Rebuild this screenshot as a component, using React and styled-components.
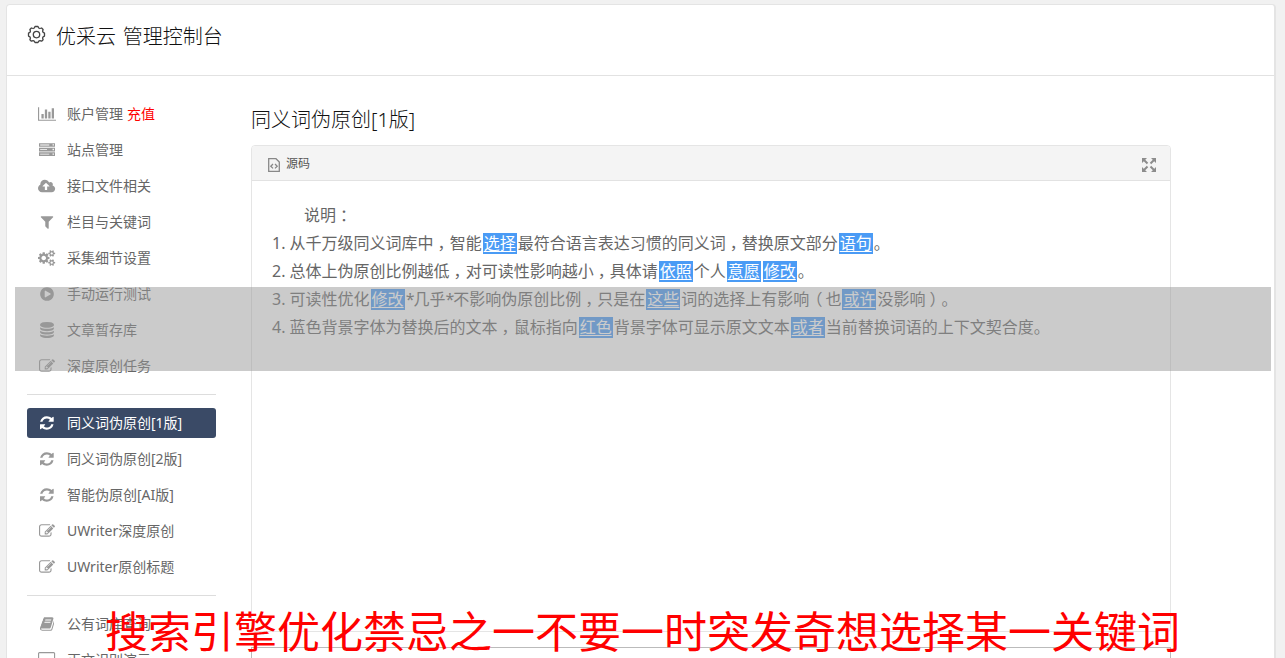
import React from 'react';
import styled, { createGlobalStyle } from 'styled-components';

const GlobalStyle = createGlobalStyle`
  * {
    box-sizing: border-box;
  }

  body {
    margin: 0;
    background: #f1f1f1;
    color: #666;
    font-family: 'Noto Sans', 'Noto Sans CJK SC', sans-serif;
    font-size: 14px;
    overflow: hidden;
  }
`;

const Page = styled.div`
  position: relative;
  height: 658px;
  padding: 4px 9px 0 6px;
  overflow: hidden;
`;

const Panel = styled.div`
  height: 700px;
  background: #fff;
  border: 1px solid #e4e4e4;
  border-right-width: 2px;
  border-radius: 4px;
`;

const Header = styled.header`
  display: flex;
  align-items: flex-start;
  gap: 10px;
  height: 71px;
  padding: 16px 20px 0;
  border-bottom: 1px solid #e2e2e2;

  svg {
    margin-top: 4px;
  }

  h1 {
    margin: 0;
    padding-top: 1px;
    color: #111;
    font-size: 20px;
    font-weight: 300;
    line-height: 30px;
    word-spacing: 1.5px;
  }
`;

const Columns = styled.div`
  display: flex;
  gap: 35px;
  padding: 23px 0 0 20px;
`;

const Menu = styled.nav`
  display: flex;
  flex-direction: column;
  gap: 6px;
  width: 189px;
  flex: none;
`;

const MenuItem = styled.a`
  display: flex;
  align-items: center;
  height: 30px;
  padding-left: 10px;
  border-radius: 3px;
  line-height: 30px;
  white-space: nowrap;
  color: ${({ $active }) => ($active ? '#fff' : '#666')};
  background: ${({ $active }) => ($active ? '#3a4a66' : 'transparent')};

  svg {
    fill: ${({ $active }) => ($active ? '#fff' : '#999')};
  }

  em {
    margin-left: 4px;
    color: #f00;
    font-style: normal;
  }
`;

const IconCell = styled.span`
  display: flex;
  justify-content: center;
  width: 20px;
  margin-right: 10px;
`;

const Divider = styled.hr`
  width: 100%;
  height: 1px;
  margin: 7px 0;
  border: 0;
  background: #ddd;
`;

const Content = styled.main`
  display: flex;
  flex-direction: column;
  width: 920px;

  h2 {
    margin: 6px 0 11px;
    color: #111;
    font-size: 20px;
    font-weight: 300;
    line-height: 29px;
  }
`;

const Editor = styled.div`
  height: 487px;
  border: 1px solid #e5e5e5;
  border-radius: 4px;
  overflow: hidden;
`;

const Toolbar = styled.div`
  display: flex;
  align-items: center;
  justify-content: space-between;
  height: 35px;
  padding: 0 13px 0 16px;
  background: #f4f4f4;
  border-bottom: 1px solid #e2e2e2;

  svg {
    margin-top: 3px;
  }
`;

const SourceButton = styled.span`
  display: flex;
  align-items: center;
  gap: 6px;
  color: #555;
  font-size: 12px;
`;

const Article = styled.div`
  display: grid;
  grid-auto-rows: 28px;
  padding: 20px;
  font-size: 16px;
  line-height: 28px;
  white-space: nowrap;
  text-spacing-trim: space-all;

  p {
    margin: 0;
  }
`;

const Intro = styled.p`
  text-indent: 32px;
`;

const Word = styled.u`
  display: inline-block;
  height: 21px;
  margin: 0 1px;
  padding: 0 1px;
  color: #fff;
  background: #4a9bf5;
  line-height: 21px;
  text-underline-offset: 2px;
`;

const Point = styled.span`
  margin: 0 -4px 0 4px;
`;

const OpenParen = styled.span`
  margin: 0 3px 0 -3px;
`;

const Star = styled.span`
  letter-spacing: -1px;
`;

const NextBox = styled.div`
  height: 60px;
  margin-top: 15px;
  border: 1px solid #bbb;
`;

const Band = styled.div`
  position: absolute;
  top: 287px;
  left: 15px;
  width: 1256px;
  height: 84px;
  background: rgba(151, 151, 151, 0.5);
`;

const Caption = styled.div`
  position: absolute;
  top: 601px;
  left: 105px;
  color: #f00;
  font-size: 43px;
  line-height: 62px;
  white-space: nowrap;
`;

const glyphs = {
  chart: {
    box: '0 0 2048 1792',
    d: 'M640 896v512h-256v-512h256zm384-512v1024h-256v-1024h256zm1024 1152v128h-2048v-1536h128v1408h1920zm-640-896v768h-256v-768h256zm384-384v1152h-256v-1152h256z',
  },
  server: {
    box: '0 0 1792 1792',
    d: 'M0 128h1792v416h-1792zM128 290v90h1024v-90zM1520 250v150h150v-150zM0 640h1792v416h-1792zM128 802v90h768v-90zM1520 762v150h150v-150zM0 1152h1792v416h-1792zM128 1314v90h1024v-90zM1520 1274v150h150v-150z',
  },
  cloud: {
    box: '0 -64 1920 1792',
    d: 'M1280 864q0-14-9-23L919 489q-9-9-23-9t-23 9L522 840q-10 12-10 24 0 14 9 23t23 9h224v352q0 13 9.5 22.5t22.5 9.5h192q13 0 22.5-9.5t9.5-22.5V896h224q13 0 22.5-9.5t9.5-22.5zm640 288q0 159-112.5 271.5T1536 1536H448q-185 0-316.5-131.5T0 1088q0-130 70-240t188-165q-2-30-2-43 0-212 150-362t362-150q156 0 285.5 87T1242 446q71-62 166-62 106 0 181 75t75 181q0 76-41 138 130 31 213.5 135.5T1920 1152z',
  },
  filter: {
    box: '0 0 1792 1792',
    d: 'M1595 295q17 41-14 70l-493 493v742q0 42-39 59-13 5-25 5-27 0-45-19l-256-256q-19-19-19-45v-486l-493-493q-31-29-14-70 17-39 59-39h1280q42 0 59 39z',
  },
  cogs: {
    box: '0 0 1920 1792',
    d: 'M896 896q0-106-75-181t-181-75-181 75-75 181 75 181 181 75 181-75 75-181zm768 512q0-52-38-90t-90-38-90 38-38 90q0 53 37.5 90.5t90.5 37.5 90.5-37.5 37.5-90.5zm0-1024q0-52-38-90t-90-38-90 38-38 90q0 53 37.5 90.5t90.5 37.5 90.5-37.5 37.5-90.5zm-384 421v185q0 10-7 19.5t-16 10.5l-155 24q-11 35-32 76 34 48 90 115 7 11 7 20 0 12-7 19-23 30-82.5 89.5t-78.5 59.5q-11 0-21-7l-115-90q-37 19-77 31-11 108-23 155-7 24-30 24h-186q-11 0-20-7.5t-10-17.5l-23-153q-34-10-75-31l-118 89q-7 7-20 7-11 0-21-8-144-133-144-160 0-9 7-19 10-14 41-53t47-61q-23-44-35-82l-152-24q-10-1-17-9.5t-7-19.5v-185q0-10 7-19.5t16-10.5l155-24q11-35 32-76-34-48-90-115-7-11-7-20 0-12 7-20 22-30 82-89t79-59q11 0 21 7l115 90q34-18 77-32 11-108 23-154 7-24 30-24h186q11 0 20 7.5t10 17.5l23 153q34 10 75 31l118-89q8-7 20-7 11 0 21 8 144 133 144 160 0 8-7 19-12 16-42 54t-45 60q23 48 34 82l152 23q10 2 17 10.5t7 19.5zm640 533v140q0 16-149 31-12 27-30 52 51 113 51 138 0 4-4 7-122 71-124 71-8 0-46-47t-52-68q-20 2-30 2t-30-2q-14 21-52 68t-46 47q-2 0-124-71-4-3-4-7 0-25 51-138-18-25-30-52-149-15-149-31v-140q0-16 149-31 13-29 30-52-51-113-51-138 0-4 4-7 4-2 35-20t59-34 30-16q8 0 46 46.5t52 67.5q20-2 30-2t30 2q51-71 92-112l6-2q4 0 124 70 4 3 4 7 0 25-51 138 17 23 30 52 149 15 149 31zm0-1024v140q0 16-149 31-12 27-30 52 51 113 51 138 0 4-4 7-122 71-124 71-8 0-46-47t-52-68q-20 2-30 2t-30-2q-14 21-52 68t-46 47q-2 0-124-71-4-3-4-7 0-25 51-138-18-25-30-52-149-15-149-31v-140q0-16 149-31 13-29 30-52-51-113-51-138 0-4 4-7 4-2 35-20t59-34 30-16q8 0 46 46.5t52 67.5q20-2 30-2t30 2q51-71 92-112l6-2q4 0 124 70 4 3 4 7 0 25-51 138 17 23 30 52 149 15 149 31z',
  },
  play: {
    box: '0 0 1792 1792',
    d: 'M896 128q209 0 385.5 103t279.5 279.5 103 385.5-103 385.5-279.5 279.5-385.5 103-385.5-103-279.5-279.5-103-385.5 103-385.5 279.5-279.5 385.5-103zm384 823q32-18 32-55t-32-55l-544-320q-31-19-64-1-32 19-32 56v640q0 37 32 56 16 8 32 8 17 0 32-9z',
  },
  database: {
    box: '0 0 1792 1792',
    d: 'M896 768q237 0 443-43t325-127v170q0 69-103 128t-280 93.5-385 34.5-385-34.5-280-93.5-103-128v-170q119 84 325 127t443 43zm0 768q237 0 443-43t325-127v170q0 69-103 128t-280 93.5-385 34.5-385-34.5-280-93.5-103-128v-170q119 84 325 127t443 43zm0-384q237 0 443-43t325-127v170q0 69-103 128t-280 93.5-385 34.5-385-34.5-280-93.5-103-128v-170q119 84 325 127t443 43zm0-1152q208 0 385 34.5t280 93.5 103 128v128q0 69-103 128t-280 93.5-385 34.5-385-34.5-280-93.5-103-128v-128q0-69 103-128t280-93.5 385-34.5z',
  },
  edit: {
    box: '0 0 1792 1792',
    d: 'M888 1184l116-116-152-152-116 116v56h96v96h56zm440-720q-16-16-33 1l-350 350q-17 17-1 33t33-1l350-350q17-17 1-33zm80 594v190q0 119-84.5 203.5t-203.5 84.5h-832q-119 0-203.5-84.5t-84.5-203.5v-832q0-119 84.5-203.5t203.5-84.5h832q63 0 117 25 15 7 18 23 3 17-9 29l-49 49q-14 14-32 8-23-6-45-6h-832q-66 0-113 47t-47 113v832q0 66 47 113t113 47h832q66 0 113-47t47-113v-126q0-13 9-22l64-64q15-15 35-7t20 29zm-96-738l288 288-672 672h-288v-288zm444 132l-92 92-288-288 92-92q28-28 68-28t68 28l152 152q28 28 28 68t-28 68z',
  },
  refresh: {
    box: '0 -128 1536 1792',
    d: 'M1511 928q0 5-1 7-64 268-268 434.5T764 1536q-146 0-282.5-55T238 1324l-129 129q-19 19-45 19t-45-19-19-45V960q0-26 19-45t45-19h448q26 0 45 19t19 45-19 45l-137 137q71 66 161 102t187 36q134 0 250-65t186-179q11-17 53-117 8-23 30-23h192q13 0 22.5 9.5t9.5 22.5zm25-800v448q0 26-19 45t-45 19h-448q-26 0-45-19t-19-45 19-45l138-138Q969 256 768 256q-134 0-250 65T332 500q-11 17-53 117-8 23-30 23H50q-13 0-22.5-9.5T18 608v-7q65-268 270-434.5T768 0q146 0 284 55.5T1297 212l130-129q19-19 45-19t45 19 19 45z',
  },
  book: {
    box: '0 0 1664 1792',
    d: 'M1639 478q40 57 18 129l-275 906q-19 64-76.5 107.5t-122.5 43.5h-923q-77 0-148.5-53.5t-99.5-131.5q-24-67-2-127 0-4 3-27t4-37q1-8-3-21.5t-3-19.5q2-11 8-21t16.5-23.5 16.5-23.5q23-38 45-91.5t30-91.5q3-10 .5-30t-.5-28q3-11 17-28t17-23q21-36 42-92t25-90q1-9-2.5-32t.5-28q4-13 22-30.5t22-22.5q19-26 42.5-84.5t27.5-96.5q1-8-3-25.5t-2-26.5q2-8 9-18t18-23 17-21q8-12 16.5-30.5t15-35 16-36 19.5-32 26.5-23.5 36-11.5 47.5 5.5l-1 3q38-9 51-9h761q74 0 114 56t18 130l-274 906q-36 119-71.5 153.5t-128.5 34.5h-869q-27 0-38 15-11 16-1 43 24 70 144 70h923q29 0 56-15.5t35-41.5l300-987q7-22 5-57 38 15 59 43zm-1064 2q-4 13 2 22.5t20 9.5h608q13 0 25.5-9.5t16.5-22.5l21-64q4-13-2-22.5t-20-9.5h-608q-13 0-25.5 9.5t-16.5 22.5zm-83 256q-4 13 2 22.5t20 9.5h608q13 0 25.5-9.5t16.5-22.5l21-64q4-13-2-22.5t-20-9.5h-608q-13 0-25.5 9.5t-16.5 22.5z',
  },
  desktop: {
    box: '0 0 1920 1792',
    d: 'M160 0h1600q66 0 113 47t47 113v1088q0 66-47 113t-113 47h-544v128q64 64 64 128h-640q0-64 64-128v-128h-544q-66 0-113-47t-47-113v-1088q0-66 47-113t113-47zM160 128q-32 0-32 32v832q0 32 32 32h1600q32 0 32-32v-832q0-32-32-32z',
  },
};

const menu = [
  { icon: 'chart', text: '账户管理', extra: '充值' },
  { icon: 'server', text: '站点管理' },
  { icon: 'cloud', text: '接口文件相关' },
  { icon: 'filter', text: '栏目与关键词' },
  { icon: 'cogs', text: '采集细节设置' },
  { icon: 'play', text: '手动运行测试' },
  { icon: 'database', text: '文章暂存库' },
  { icon: 'edit', text: '深度原创任务' },
  null,
  { icon: 'refresh', text: '同义词伪原创[1版]', active: true },
  { icon: 'refresh', text: '同义词伪原创[2版]' },
  { icon: 'refresh', text: '智能伪原创[AI版]' },
  { icon: 'edit', text: 'UWriter深度原创' },
  { icon: 'edit', text: 'UWriter原创标题' },
  null,
  { icon: 'book', text: '公有词库查询' },
  { icon: 'desktop', text: '正文识别演示' },
];

const MenuIcon = ({ name }) => (
  <svg height="16" width={(16 * glyphs[name].box.split(' ')[2]) / 1792} viewBox={glyphs[name].box}>
    <path fillRule="evenodd" d={glyphs[name].d} />
  </svg>
);

const GearIcon = () => (
  <svg width="19" height="19" viewBox="0 0 19 19" fill="none" stroke="#444" strokeWidth="1.3">
    <path
      strokeLinejoin="round"
      d="M8 1.500h3l.7 1.500 1.200.5 1.700-.5 1.500 1.500-.5 1.700.6 1.200 1.300.7v3l-1.400.7-.5 1.200.5 1.700-1.500 1.500-1.700-.5-1.200.5-.7 1.300H8l-.7-1.300-1.200-.5-1.700.5-1.500-1.500.5-1.700-.5-1.200-1.400-.7v-3l1.400-.7.5-1.200-.5-1.700 1.500-1.500 1.700.5 1.200-.5z"
    />
    <circle cx="9.500" cy="9.600" r="3.200" />
  </svg>
);

const SourceIcon = () => (
  <svg width="12" height="14" viewBox="0 0 12 14" fill="none" stroke="#888" strokeWidth="1.300">
    <path d="M.7.7h7.300l3.300 3.300v9.300H.7zM5 6L2.800 8.200 5 10.400M7 6l2.200 2.200L7 10.400" />
  </svg>
);

const ExpandIcon = () => (
  <svg width="16" height="16" viewBox="0 0 16 16" fill="#8c8c8c" stroke="#8c8c8c" strokeWidth="2">
    <path stroke="none" d="M1 1h5L1 6zM15 1h-5l5 5zM1 15h5l-5-5zM15 15h-5l5-5z" />
    <path d="M2.500 2.500l4 4M13.500 2.500l-4 4M2.500 13.500l4-4M13.500 13.500l-4-4" />
  </svg>
);

const App = () => {
  return (
    <Page>
      <GlobalStyle />
      <Panel>
        <Header>
          <GearIcon />
          <h1>优采云 管理控制台</h1>
        </Header>
        <Columns>
          <Menu>
            {menu.map((item, i) =>
              item ? (
                <MenuItem key={i} $active={item.active}>
                  <IconCell>
                    <MenuIcon name={item.icon} />
                  </IconCell>
                  {item.text}
                  {item.extra && <em>{item.extra}</em>}
                </MenuItem>
              ) : (
                <Divider key={i} />
              )
            )}
          </Menu>
          <Content>
            <h2>同义词伪原创[1版]</h2>
            <Editor>
              <Toolbar>
                <SourceButton>
                  <SourceIcon />
                  源码
                </SourceButton>
                <ExpandIcon />
              </Toolbar>
              <Article>
                <Intro>说明<Point>：</Point></Intro>
                <p>
                  1. 从千万级同义词库中<Point>，</Point>智能<Word>选择</Word>最符合语言表达习惯的同义词
                  <Point>，</Point>替换原文部分<Word>语句</Word>。
                </p>
                <p>
                  2. 总体上伪原创比例越低<Point>，</Point>对可读性影响越小<Point>，</Point>具体请
                  <Word>依照</Word>个人<Word>意愿</Word>
                  <Word>修改</Word>。
                </p>
                <p>
                  3. 可读性优化<Word>修改</Word><Star>*</Star>几乎<Star>*</Star>不影响伪原创比例
                  <Point>，</Point>只是在<Word>这些</Word>词的选择上有影响<OpenParen>（</OpenParen>也
                  <Word>或许</Word>没影响<Point>）</Point>。
                </p>
                <p>
                  4. 蓝色背景字体为替换后的文本<Point>，</Point>鼠标指向<Word>红色</Word>背景字体可显示原文文本
                  <Word>或者</Word>当前替换词语的上下文契合度。
                </p>
              </Article>
            </Editor>
            <NextBox />
          </Content>
        </Columns>
      </Panel>
      <Band />
      <Caption>搜索引擎优化禁忌之一不要一时突发奇想选择某一关键词</Caption>
    </Page>
  );
};

export default App;
